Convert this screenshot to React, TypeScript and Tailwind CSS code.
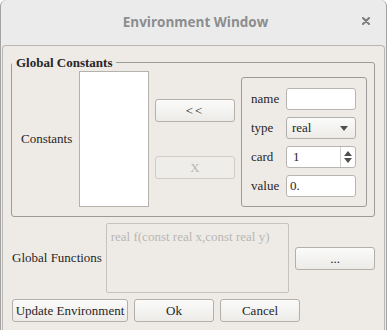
import React from "react";

const Btn = ({
  children,
  className = "",
  disabled = false,
}: {
  children: React.ReactNode;
  className?: string;
  disabled?: boolean;
}) => (
  <button
    className={
      "h-[23px] rounded-[3px] border flex items-center justify-center text-[13px] leading-none " +
      (disabled
        ? "border-[#cfccc8] bg-[#efedea] text-[#b9b7b4] "
        : "border-[#b3b0ab] bg-gradient-to-b from-[#fbfbfa] to-[#ecebe8] text-[#262626] ") +
      className
    }
  >
    {children}
  </button>
);

const Field = ({ label, children }: { label: string; children: React.ReactNode }) => (
  <div className="flex items-center h-[22px]">
    <span className="w-[35px] text-[13px] text-[#262626]">{label}</span>
    {children}
  </div>
);

export default function App() {
  return (
    <div className="w-[387px] h-[330px] overflow-hidden bg-[#ebebeb] border-x border-[#a3a3a3] rounded-t-[6px] flex flex-col font-['Liberation_Serif',serif] text-[#262626]">
      {/* Title bar */}
      <div className="h-[45px] shrink-0 flex items-center relative">
        <span className="flex-1 text-center pl-[4px] font-['Open_Sans',sans-serif] font-bold text-[13.5px] text-[#8b8d8e]">
          Environment Window
        </span>
        <svg className="absolute right-[16px] top-[17px]" width="8" height="8" viewBox="0 0 8 8">
          <path d="M1 1L7 7M7 1L1 7" stroke="#7c7c7c" strokeWidth="2" strokeLinecap="round" />
        </svg>
      </div>

      {/* Body */}
      <div className="flex-1 mx-[1px] bg-[#eeebe7] border border-b-0 border-[#b9b7b3] rounded-t-[4px] pl-[8px] pr-[9px] pt-[9px] flex flex-col">
        <fieldset className="border border-[#9b9a98] rounded-[3px] pb-[9px]">
          <legend className="px-[4px] font-bold text-[13px] leading-[15px]">Global Constants</legend>
          <div className="flex items-center pl-[9px]">
            <span className="w-[58px] text-[13px]">Constants</span>
            <div className="w-[70px] h-[136px] bg-white border border-[#b5b2ae]" />
            <div className="ml-[6px] flex flex-col gap-[34px]">
              <Btn className="w-[80px]">
                <span className="tracking-[2px]">&lt;&lt;</span>
              </Btn>
              <Btn className="w-[80px]" disabled>
                X
              </Btn>
            </div>
            <div className="ml-[6px] mt-[7px] w-[126px] border border-[#9b9a98] rounded-[3px] pt-[10px] pb-[9px] pl-[9px] pr-[10px] flex flex-col gap-[7px]">
              <Field label="name">
                <div className="w-[70px] h-[22px] bg-white border border-[#b8b5b1] rounded-[3px]" />
              </Field>
              <Field label="type">
                <div className="w-[70px] h-[22px] border border-[#b3b0ab] rounded-[3px] bg-gradient-to-b from-[#fbfbfa] to-[#ecebe8] flex items-center pl-[5px] pr-[7px] text-[13px]">
                  <span className="flex-1">real</span>
                  <svg width="8" height="5" viewBox="0 0 8 5">
                    <path d="M0 0H8L4 5Z" fill="#4f4f4f" />
                  </svg>
                </div>
              </Field>
              <Field label="card">
                <div className="w-[70px] h-[22px] bg-white border border-[#b8b5b1] rounded-[3px] flex items-center text-[13px]">
                  <span className="flex-1 pl-[6px]">1</span>
                  <div className="w-[15px] h-full border-l border-[#d2d0cc] flex flex-col items-center justify-center gap-[2px]">
                    <svg width="8" height="5" viewBox="0 0 8 5">
                      <path d="M0 5H8L4 0Z" fill="#4f4f4f" />
                    </svg>
                    <svg width="8" height="5" viewBox="0 0 8 5">
                      <path d="M0 0H8L4 5Z" fill="#4f4f4f" />
                    </svg>
                  </div>
                </div>
              </Field>
              <Field label="value">
                <div className="w-[70px] h-[22px] bg-white border border-[#b8b5b1] rounded-[3px] flex items-center pl-[3px] text-[13px]">
                  0.
                </div>
              </Field>
            </div>
          </div>
        </fieldset>

        <div className="flex items-center mt-[6px] pl-[1px]">
          <span className="w-[94px] text-[13px]">Global Functions</span>
          <div className="w-[184px] h-[70px] border border-[#c6c3bf] rounded-[2px] px-[4px] pt-[3px] text-[13px] text-[#b9b7b4]">
            real f(const real x,const real y)
          </div>
          <Btn className="ml-[6px] w-[80px]">...</Btn>
        </div>

        <div className="flex gap-[6px] mt-[6px] pl-[1px]">
          <Btn className="w-[116px]">Update Environment</Btn>
          <Btn className="w-[80px]">Ok</Btn>
          <Btn className="w-[80px]">Cancel</Btn>
        </div>
      </div>
    </div>
  );
}
